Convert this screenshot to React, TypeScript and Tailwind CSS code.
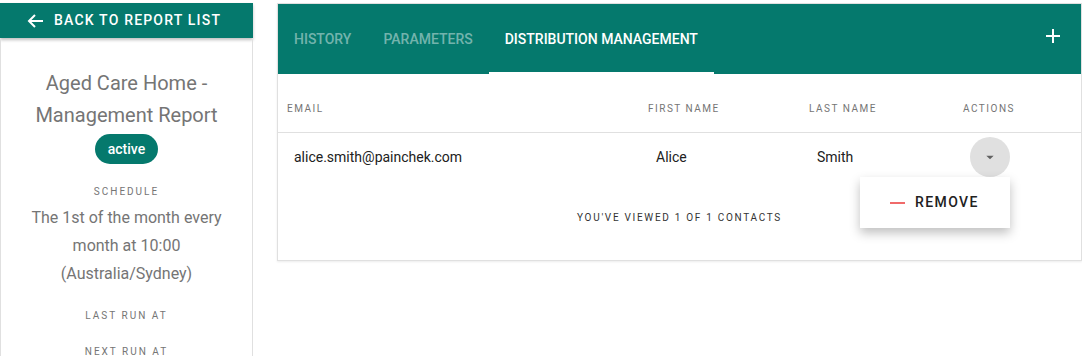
import React from "react";

const TEAL = "bg-[#05796d]";

function BackArrow() {
    return (
        <svg width="17" height="14" viewBox="0 0 17 14" fill="none" stroke="white" strokeWidth="2">
            <path d="M16 7H2" />
            <path d="M8 1L2 7l6 6" />
        </svg>
    );
}

function Sidebar() {
    return (
        <div className="w-[253px] shrink-0 flex flex-col">
            <button className={`${TEAL} shrink-0 h-[35px] w-full flex items-center pl-[27px] gap-[10px] shadow-[0_2px_3px_rgba(0,0,0,0.25)] text-white text-[14px] font-medium tracking-[0.085em] uppercase`}>
                <BackArrow />
                <span>Back to report list</span>
            </button>
            <div className="flex-1 border-x border-[#e0e0e0] flex flex-col items-center text-center text-[#757575]">
                <h1 className="mt-[29px] text-[20px] leading-[32px] px-4">
                    Aged Care Home -<br />Management Report
                </h1>
                <span className={`${TEAL} mt-[3px] h-[30px] px-[13px] rounded-full flex items-center text-white text-[14px] font-medium`}>
                    active
                </span>
                <div className="mt-[20px] text-[10px] leading-[16px] tracking-[0.2em] uppercase">Schedule</div>
                <p className="mt-[4px] text-[16px] leading-[28px] px-6">
                    The 1st of the month every month at 10:00 (Australia/Sydney)
                </p>
                <div className="mt-[20px] text-[10px] leading-[16px] tracking-[0.2em] uppercase">Last run at</div>
                <div className="mt-[20px] text-[10px] leading-[16px] tracking-[0.2em] uppercase">Next run at</div>
            </div>
        </div>
    );
}

function Tabs() {
    const tabs = ["History", "Parameters", "Distribution Management"];
    return (
        <div className={`${TEAL} h-[70px] flex items-stretch`}>
            {tabs.map((t, i) => (
                <div
                    key={t}
                    className={`relative px-4 flex items-center text-[14px] font-medium uppercase ${
                        i === 2 ? "text-white" : "text-[rgba(255,255,255,0.45)]"
                    }`}
                >
                    {t}
                    {i === 2 && <span className="absolute left-0 right-0 bottom-0 h-[2px] bg-white" />}
                </div>
            ))}
            <div className="ml-auto pr-[20px] pb-[6px] flex items-center">
                <svg width="16" height="16" viewBox="0 0 16 16" stroke="white" strokeWidth="2">
                    <path d="M8 1v14M1 8h14" />
                </svg>
            </div>
        </div>
    );
}

function DistributionTable() {
    const cols = "grid grid-cols-[360px_161px_154px_1fr]";
    return (
        <div className="ml-[24px] flex-1 h-[258px] border border-[#e0e0e0] shadow-[0_1px_2px_rgba(0,0,0,0.08)] flex flex-col">
            <Tabs />
            <div className={`${cols} h-[59px] pt-[29px] border-b border-[#e0e0e0] text-[10px] leading-[12px] tracking-[0.15em] uppercase text-[#757575]`}>
                <div className="pl-[9px]">Email</div>
                <div className="pl-[10px]">First name</div>
                <div className="pl-[10px]">Last name</div>
                <div className="pl-[10px]">Actions</div>
            </div>
            <div className={`${cols} h-[48px] items-center text-[14px] text-[#212121]`}>
                <div className="pl-[16px]">alice.smith@painchek.com</div>
                <div className="pl-[18px]">Alice</div>
                <div className="pl-[18px]">Smith</div>
                <div className="pl-[17px]">
                    <div className="relative w-[40px]">
                        <button className="w-[40px] h-[40px] rounded-full bg-[#e0e0e0] flex items-center justify-center">
                            <svg width="22" height="22" viewBox="0 0 24 24" fill="#616161">
                                <path d="M8 10.5l4 4 4-4z" />
                            </svg>
                        </button>
                        <div className="absolute right-0 top-full w-[150px] h-[51px] bg-white shadow-[0_5px_10px_rgba(0,0,0,0.25)] flex items-center pl-[30px] gap-[10px] z-10">
                            <span className="w-[15px] h-[2px] bg-[#f06a6a]" />
                            <span className="text-[14px] font-medium tracking-[0.1em] uppercase text-[#212121]">Remove</span>
                        </div>
                    </div>
                </div>
            </div>
            <div className="pt-[31px] text-center text-[10px] leading-[12px] tracking-[0.17em] uppercase text-[#333]">
                You've viewed 1 of 1 contacts
            </div>
        </div>
    );
}

export default function App() {
    return (
        <div className="w-[1082px] h-[356px] overflow-hidden bg-white pt-[3px] flex font-['Roboto',sans-serif]">
            <Sidebar />
            <DistributionTable />
        </div>
    );
}
